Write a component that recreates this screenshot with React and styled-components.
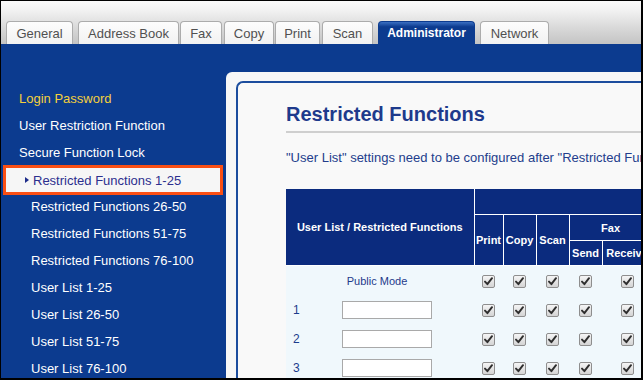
import React from 'react'
import styled, { createGlobalStyle } from 'styled-components'

const GlobalStyle = createGlobalStyle`
  body {
    margin: 0;
    font-family: "Liberation Sans", Arial, sans-serif;
  }
`

const tabs = [
  { label: 'General', w: 67, gap: 5 },
  { label: 'Address Book', w: 101, gap: 1 },
  { label: 'Fax', w: 42, gap: 2 },
  { label: 'Copy', w: 50, gap: 1 },
  { label: 'Print', w: 45, gap: 2 },
  { label: 'Scan', w: 51, gap: 5 },
  { label: 'Administrator', w: 97, gap: 5, active: true },
  { label: 'Network', w: 69, gap: 0 },
]

const menu = [
  { label: 'Login Password', level: 0, gold: true },
  { label: 'User Restriction Function', level: 0 },
  { label: 'Secure Function Lock', level: 0 },
  { label: 'Restricted Functions 1-25', level: 1, selected: true },
  { label: 'Restricted Functions 26-50', level: 1 },
  { label: 'Restricted Functions 51-75', level: 1 },
  { label: 'Restricted Functions 76-100', level: 1 },
  { label: 'User List 1-25', level: 1 },
  { label: 'User List 26-50', level: 1 },
  { label: 'User List 51-75', level: 1 },
  { label: 'User List 76-100', level: 1 },
]

const rows = ['1', '2', '3']
const funcCols = 5

const Check = () => (
  <CheckBox>
    <svg width="9" height="9" viewBox="0 0 9 9">
      <path d="M1 4.6 L3.4 7.2 L8 1.2" fill="none" stroke="#2e2e2e" strokeWidth="1.9" strokeLinecap="round" strokeLinejoin="round" />
    </svg>
  </CheckBox>
)

const App = () => {
  return (
    <Frame>
      <GlobalStyle />
      <TabBar>
        {tabs.map((t) => (
          <Tab key={t.label} $w={t.w} $gap={t.gap} $active={t.active}>
            {t.label}
          </Tab>
        ))}
      </TabBar>
      <Body>
        <Sidebar>
          {menu.map((m) =>
            m.selected ? (
              <Selected key={m.label}>
                <Arrow />
                {m.label}
              </Selected>
            ) : (
              <NavItem key={m.label} $level={m.level} $gold={m.gold}>
                {m.label}
              </NavItem>
            )
          )}
        </Sidebar>
        <Main>
          <Panel>
            <Inner>
              <Title>Restricted Functions</Title>
              <Note>"User List" settings need to be configured after "Restricted Functions" settings.</Note>
              <Table>
                <colgroup>
                  <col width="188" />
                  <col width="29" />
                  <col width="33" />
                  <col width="33" />
                  <col width="33" />
                  <col width="50" />
                </colgroup>
                <thead>
                  <tr>
                    <Th rowSpan={3} $h={25}>User List / Restricted Functions</Th>
                    <Th colSpan={5} $h={25}></Th>
                  </tr>
                  <tr>
                    <Th rowSpan={2}>Print</Th>
                    <Th rowSpan={2}>Copy</Th>
                    <Th rowSpan={2}>Scan</Th>
                    <Th colSpan={2} $h={25}>Fax</Th>
                  </tr>
                  <tr>
                    <Th $h={24}>Send</Th>
                    <Th $h={24}>Receive</Th>
                  </tr>
                </thead>
                <tbody>
                  <tr>
                    <NameCell $center>Public Mode</NameCell>
                    {Array.from({ length: funcCols }).map((_, i) => (
                      <Td key={i}><Check /></Td>
                    ))}
                  </tr>
                  {rows.map((r) => (
                    <tr key={r}>
                      <NameCell>
                        <UserRow>
                          <Num>{r}</Num>
                          <NameInput type="text" />
                        </UserRow>
                      </NameCell>
                      {Array.from({ length: funcCols }).map((_, i) => (
                        <Td key={i}><Check /></Td>
                      ))}
                    </tr>
                  ))}
                </tbody>
              </Table>
            </Inner>
          </Panel>
        </Main>
      </Body>
    </Frame>
  )
}

const Frame = styled.div`
  width: 643px;
  height: 380px;
  box-sizing: border-box;
  border-top: 1px solid #000;
  border-left: 1px solid #000;
  border-right: 2px solid #000;
  border-bottom: 2px solid #000;
  overflow: hidden;
  display: flex;
  flex-direction: column;
`

const TabBar = styled.div`
  height: 43px;
  flex-shrink: 0;
  display: flex;
  align-items: flex-end;
  padding-left: 5px;
  background: linear-gradient(#fafafa 0%, #f0f0f0 25%, #dadada 60%, #c4c4c4 100%);
`

const Tab = styled.div`
  width: ${(p) => p.$w}px;
  margin-right: ${(p) => p.$gap}px;
  height: 23px;
  box-sizing: border-box;
  display: flex;
  align-items: center;
  justify-content: center;
  border: 1px solid ${(p) => (p.$active ? '#0c3b8f' : '#acacac')};
  border-bottom: none;
  border-radius: 4px 4px 0 0;
  background: ${(p) =>
    p.$active ? 'linear-gradient(#3a6fc2 0%, #0c3b8f 22%, #0c3b8f 100%)' : 'linear-gradient(#fdfdfd, #f2f2f2)'};
  color: ${(p) => (p.$active ? '#fff' : '#505050')};
  font-size: ${(p) => (p.$active ? '12px' : '13px')};
  font-weight: ${(p) => (p.$active ? 'bold' : 'normal')};
  white-space: nowrap;
`

const Body = styled.div`
  flex: 1;
  display: flex;
  background: #0c3b8f;
  min-height: 0;
`

const Sidebar = styled.div`
  width: 225px;
  flex-shrink: 0;
  padding-top: 41px;
`

const NavItem = styled.div`
  height: 27px;
  display: flex;
  align-items: center;
  padding-left: ${(p) => (p.$level ? 30 : 18)}px;
  color: ${(p) => (p.$gold ? '#f4d03c' : '#fff')};
  font-size: 13px;
  white-space: nowrap;
`

const Selected = styled.div`
  height: 30px;
  margin: -1px 3px -2px 2px;
  box-sizing: border-box;
  border: 3px solid #fb4f14;
  background: #f6f6f6;
  display: flex;
  align-items: center;
  padding-left: 19px;
  color: #2c2f8e;
  font-size: 13px;
  white-space: nowrap;
`

const Arrow = styled.span`
  width: 0;
  height: 0;
  border-top: 3.5px solid transparent;
  border-bottom: 3.5px solid transparent;
  border-left: 4px solid #1d2c8a;
  margin-right: 4px;
`

const Main = styled.div`
  flex: 1;
  min-width: 0;
  padding-top: 28px;
  overflow: hidden;
`

const Panel = styled.div`
  height: 100%;
  box-sizing: border-box;
  background: #f7f7f7;
  border-radius: 6px 0 0 0;
  padding: 9px 0 0 10px;
`

const Inner = styled.div`
  height: 100%;
  box-sizing: border-box;
  border-left: 2px solid #1c4d9e;
  border-top: 2px solid #1c4d9e;
  border-radius: 7px 0 0 0;
  background: #f9f9f9;
  padding: 20px 0 0 48px;
  white-space: nowrap;
`

const Title = styled.h1`
  margin: 0;
  font-size: 20px;
  line-height: 23px;
  font-weight: bold;
  color: #1e3a8c;
  padding-bottom: 5px;
  border-bottom: 2px solid #cfcfcf;
  width: 420px;
`

const Note = styled.p`
  margin: 17px 0 0;
  font-size: 13px;
  line-height: 15px;
  color: #233d8c;
`

const Table = styled.table`
  margin-top: 24px;
  border-collapse: collapse;
  table-layout: fixed;
  width: 366px;
`

const Th = styled.th`
  background: #0b2b7e;
  color: #fff;
  font-size: 11px;
  font-weight: bold;
  height: ${(p) => (p.$h ? `${p.$h}px` : 'auto')};
  padding: 0;
  border: 1px solid #fff;
  border-top: none;
  text-align: center;
  overflow: hidden;
  white-space: nowrap;
  &:first-child {
    border-left: none;
  }
`

const Td = styled.td`
  height: 29px;
  padding: 0;
  background: #f0f8fc;
  text-align: center;
  vertical-align: middle;
`

const NameCell = styled(Td)`
  text-align: ${(p) => (p.$center ? 'center' : 'left')};
  font-size: 11px;
  color: #1f3a8a;
  padding-right: ${(p) => (p.$center ? '6px' : '0')};
`

const UserRow = styled.div`
  display: flex;
  align-items: center;
`

const Num = styled.span`
  width: 56px;
  padding-left: 7px;
  box-sizing: border-box;
  font-size: 12px;
  color: #1b3c8c;
`

const NameInput = styled.input`
  width: 90px;
  height: 18px;
  box-sizing: border-box;
  margin: 0;
  border: 1px solid #a9a9a9;
  background: #fff;
  padding: 0 2px;
`

const CheckBox = styled.span`
  display: inline-flex;
  align-items: center;
  justify-content: center;
  width: 13px;
  height: 13px;
  box-sizing: border-box;
  border: 1px solid #8e8e8e;
  border-radius: 2px;
  background: linear-gradient(#f5f5f5, #d4d4d4);
  vertical-align: middle;
`

export default App
